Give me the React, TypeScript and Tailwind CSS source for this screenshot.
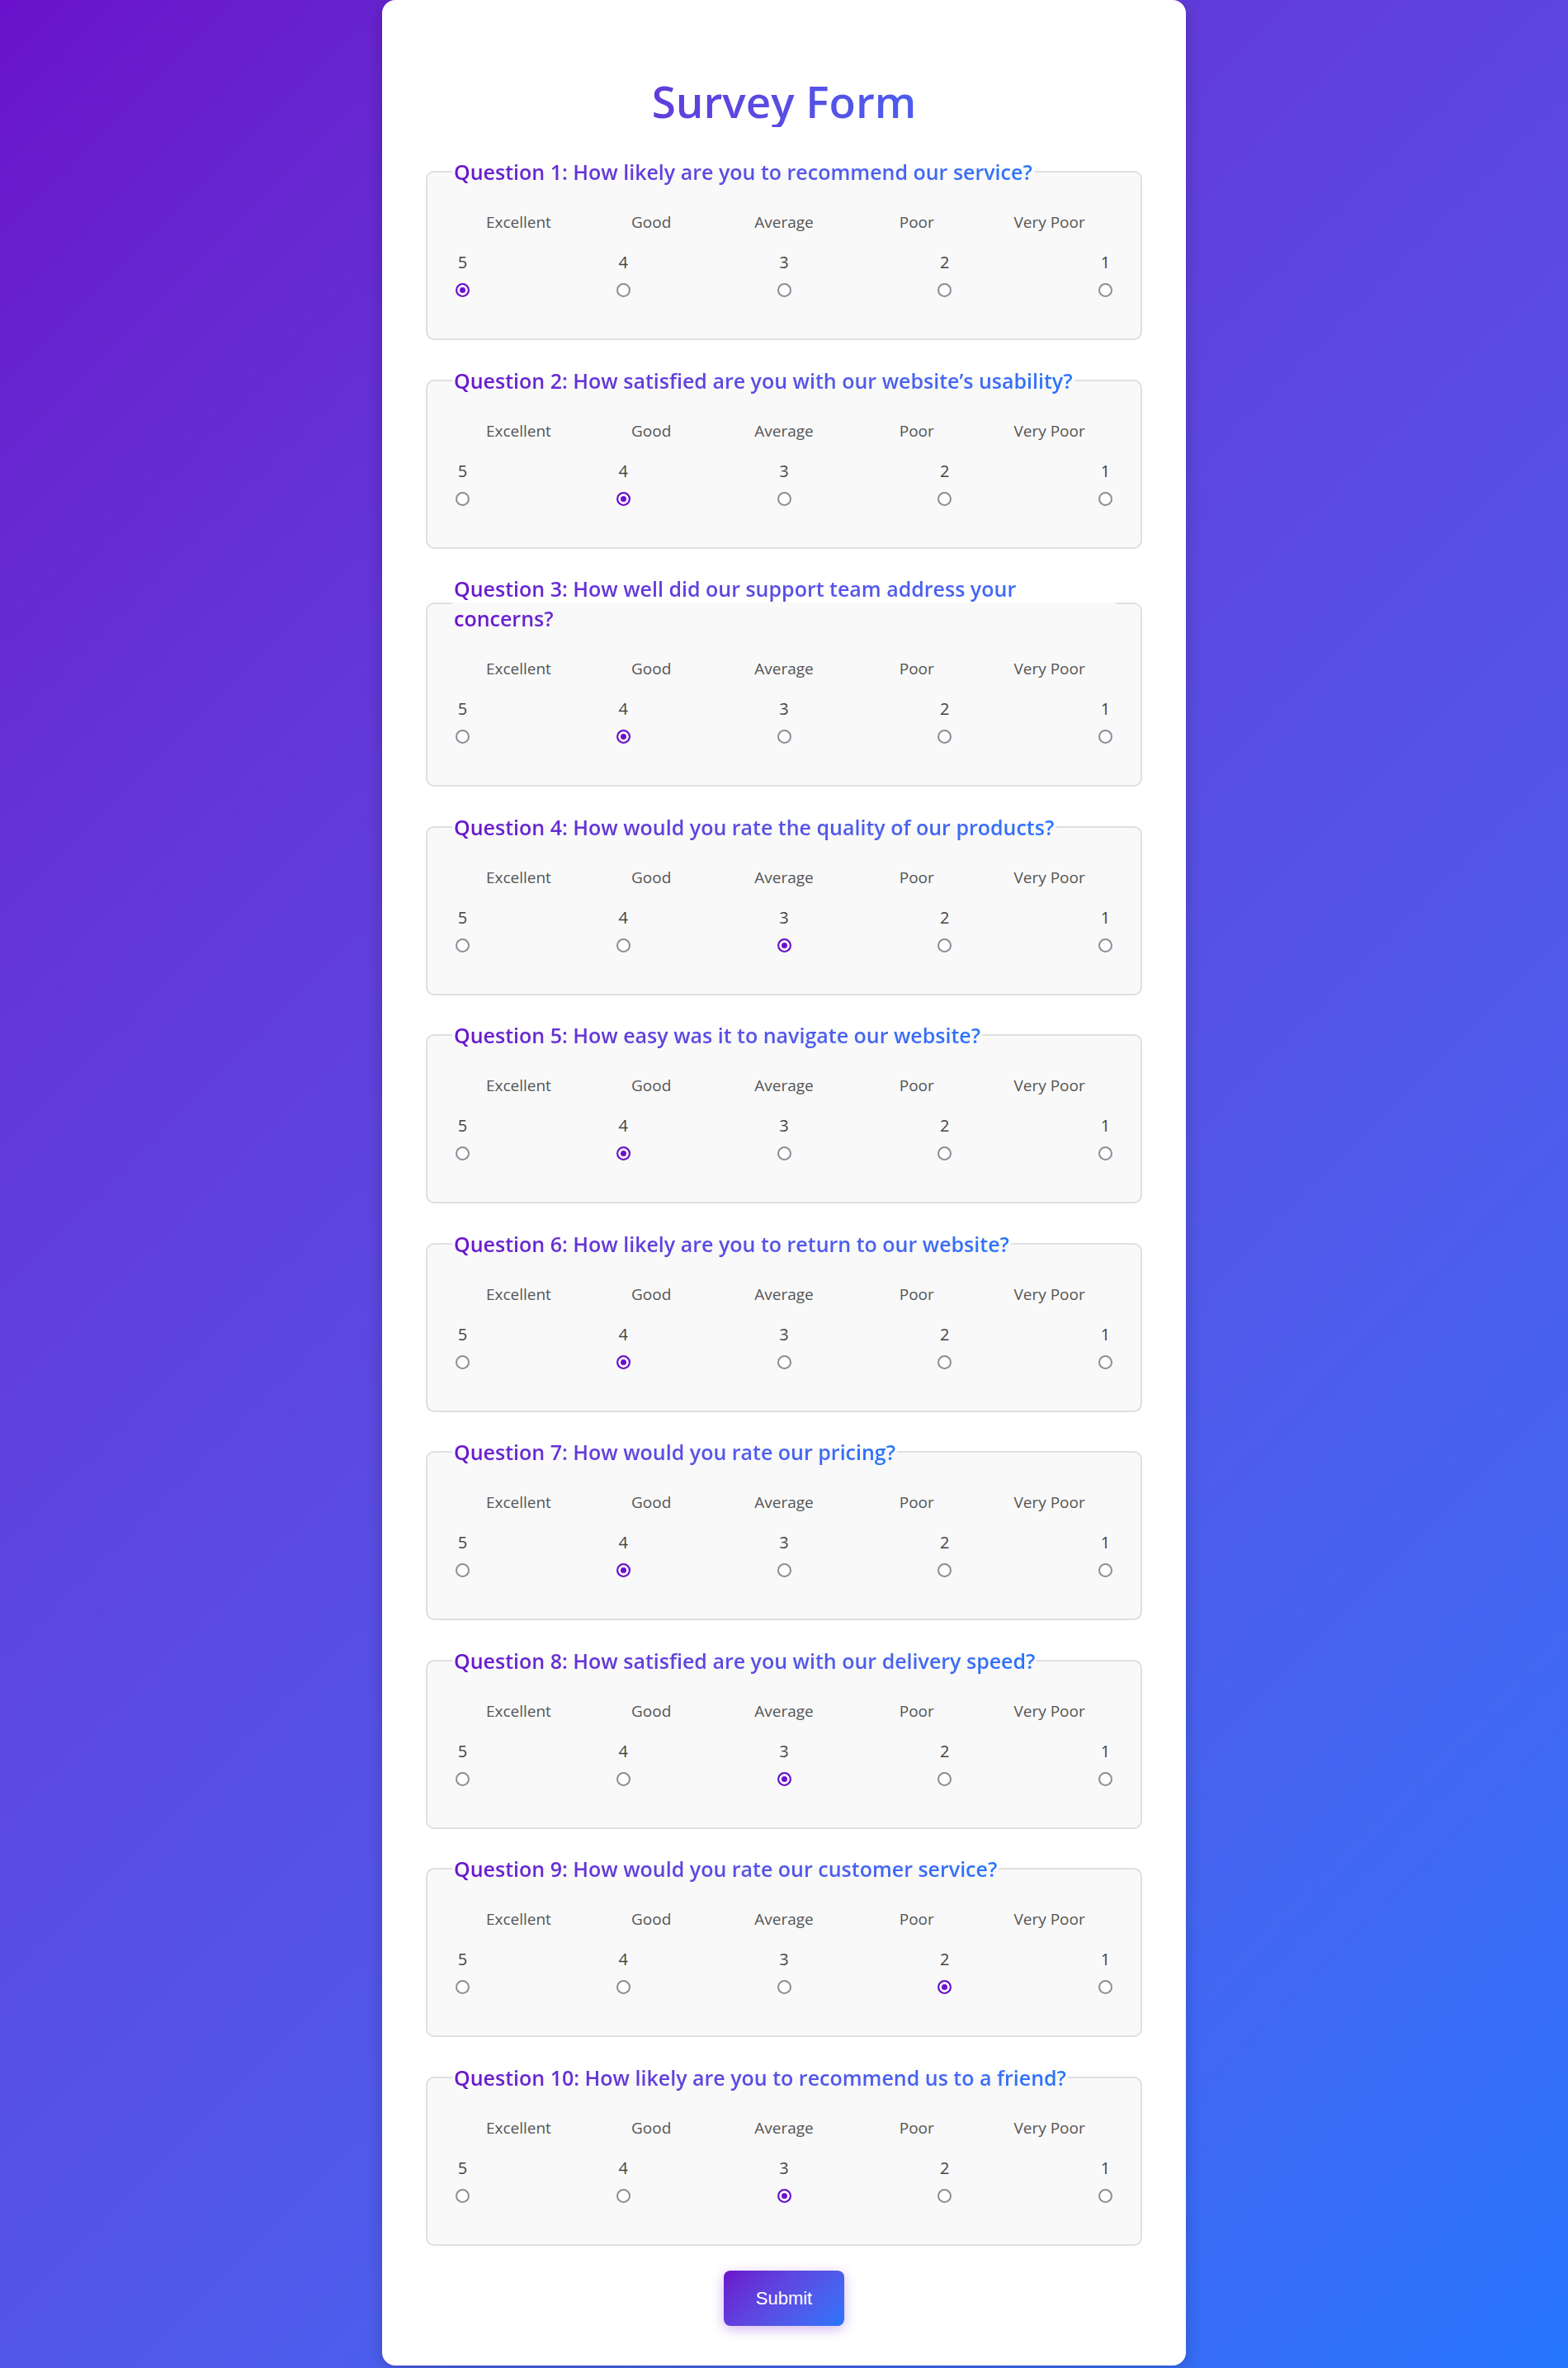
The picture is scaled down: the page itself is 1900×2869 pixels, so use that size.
import { useState } from 'react'

const questions = [
  'How likely are you to recommend our service?',
  'How satisfied are you with our website’s usability?',
  'How well did our support team address your concerns?',
  'How would you rate the quality of our products?',
  'How easy was it to navigate our website?',
  'How likely are you to return to our website?',
  'How would you rate our pricing?',
  'How satisfied are you with our delivery speed?',
  'How would you rate our customer service?',
  'How likely are you to recommend us to a friend?',
]

const labels = ['Excellent', 'Good', 'Average', 'Poor', 'Very Poor']
const scores = [5, 4, 3, 2, 1]

export default function App() {
  const [answers, setAnswers] = useState<number[]>([5, 4, 4, 3, 4, 4, 4, 3, 2, 3])

  const pick = (q: number, value: number) => {
    setAnswers(prev => prev.map((a, i) => (i === q ? value : a)))
  }

  return (
    <div className="min-h-screen bg-linear-135 from-[#6a11cb] to-[#2575fc] font-['Open_Sans',sans-serif] pb-[2px]">
      <form
        onSubmit={e => e.preventDefault()}
        className="mx-auto w-[974px] bg-white rounded-2xl shadow-[0_4px_20px_rgba(0,0,0,0.2)] px-[53px] pt-[92px] pb-[48px]"
      >
        {/* TITLE */}
        <h1 className="text-center text-[53px] leading-[62px] font-semibold bg-linear-to-r from-[#6a11cb] to-[#2575fc] bg-clip-text text-transparent mb-[36px]">
          Survey Form
        </h1>

        {/* QUESTIONS */}
        {questions.map((text, q) => (
          <fieldset
            key={q}
            className="border-2 border-[#e0e0e0] rounded-[10px] bg-[#f9f9f9] px-[30px] pb-[30px] pt-[30px] mb-[30.5px]"
          >
            <legend className="px-[2px] text-[25px] leading-[36px] font-semibold bg-linear-to-r from-[#6a11cb] to-[#2575fc] bg-clip-text text-transparent">
              Question {q + 1}: {text}
            </legend>

            <div className="flex text-[19px] leading-[27px] text-[#555] mb-[20px]">
              {labels.map(label => (
                <span key={label} className="flex-1 text-center">
                  {label}
                </span>
              ))}
            </div>

            <div className="flex justify-between pb-[20px]">
              {scores.map(score => (
                <label key={score} className="flex flex-col items-center cursor-pointer">
                  <span className="text-[20px] leading-[30px] text-[#444]">{score}</span>
                  <input
                    type="radio"
                    name={`q${q + 1}`}
                    value={score}
                    checked={answers[q] === score}
                    onChange={() => pick(q, score)}
                    className="appearance-none mt-[10px] mx-[4px] w-[17px] h-[17px] rounded-full border-2 border-[#8e8c99] bg-white cursor-pointer checked:border-[#6a11cb] checked:bg-[#6a11cb] checked:shadow-[inset_0_0_0_3px_#fff]"
                  />
                </label>
              ))}
            </div>
          </fieldset>
        ))}

        {/* SUBMIT */}
        <div className="flex justify-center">
          <button
            type="submit"
            className="px-[39px] py-[20px] rounded-[8px] text-white text-[22px] leading-[27px] font-['Liberation_Sans',sans-serif] bg-linear-135 from-[#6a11cb] to-[#2575fc] shadow-[0_4px_15px_rgba(106,17,203,0.3)] hover:opacity-90 transition"
          >
            Submit
          </button>
        </div>
      </form>
    </div>
  )
}
